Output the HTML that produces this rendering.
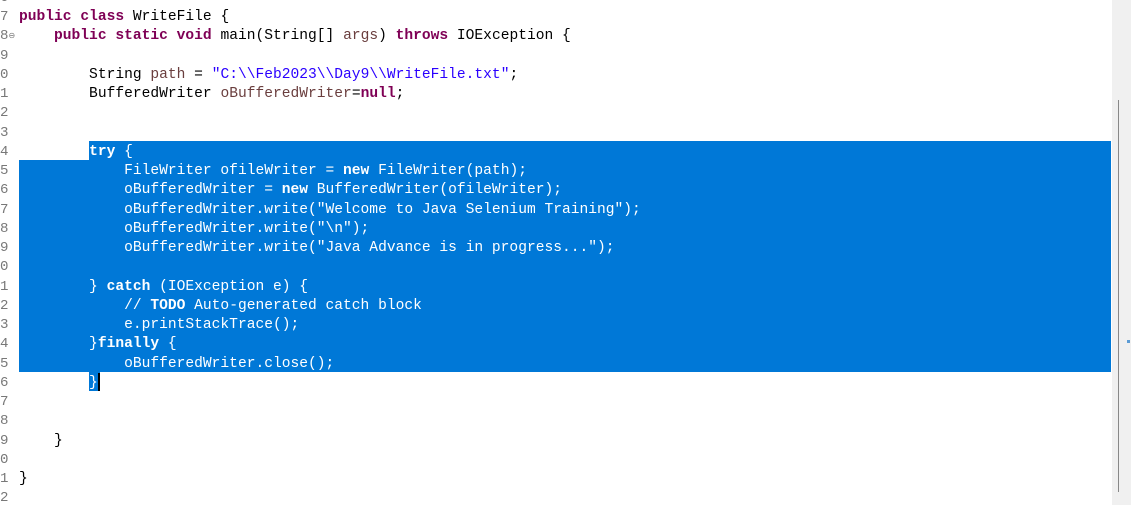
<!DOCTYPE html>
<html><head><meta charset="utf-8"><style>
html,body{margin:0;padding:0;background:#fff;width:1131px;height:505px;overflow:hidden;position:relative;}
.ln{position:absolute;left:0;width:12px;font:14.1px "Liberation Mono",monospace;color:#787878;}
.code{position:absolute;left:19px;font:14.6px "Liberation Mono",monospace;color:#000;white-space:pre;}
.row{position:absolute;height:19.24px;line-height:19.24px;}
.k{color:#7f0055;font-weight:bold}
.s{color:#2a00ff}
.v{color:#6a3e3e}
.sel{position:absolute;background:#0078d7;}
.w,.w .k,.w .s,.w .v{color:#fff}
</style></head><body>
<div class="sel" style="left:89px;top:141px;width:1022px;height:19.3px"></div>
<div class="sel" style="left:19px;top:160.2px;width:1092px;height:212px"></div>
<div class="sel" style="left:89px;top:372px;width:11px;height:19.3px"></div>
<div style="position:absolute;left:98px;top:373px;width:2px;height:18px;background:#000"></div>
<div style="position:absolute;left:1112px;top:0;width:19px;height:505px;background:#f0f0f0"></div>
<div style="position:absolute;left:1118px;top:100px;width:1px;height:392px;background:#888"></div>
<div style="position:absolute;left:1127px;top:340px;width:3px;height:3px;background:#5b9bd5"></div>
<div id="nums"></div>
<div class="code" id="c"></div>
<script>
var lines=[
'',
'<span class="k">public</span> <span class="k">class</span> WriteFile {',
'    <span class="k">public</span> <span class="k">static</span> <span class="k">void</span> main(String[] <span class="v">args</span>) <span class="k">throws</span> IOException {',
'',
'        String <span class="v">path</span> = <span class="s">"C:\\\\Feb2023\\\\Day9\\\\WriteFile.txt"</span>;',
'        BufferedWriter <span class="v">oBufferedWriter</span>=<span class="k">null</span>;',
'',
'',
'        <span class="w"><span class="k">try</span> {</span>',
'<span class="w">            FileWriter ofileWriter = <span class="k">new</span> FileWriter(path);</span>',
'<span class="w">            oBufferedWriter = <span class="k">new</span> BufferedWriter(ofileWriter);</span>',
'<span class="w">            oBufferedWriter.write("Welcome to Java Selenium Training");</span>',
'<span class="w">            oBufferedWriter.write("\\n");</span>',
'<span class="w">            oBufferedWriter.write("Java Advance is in progress...");</span>',
'',
'<span class="w">        } <span class="k">catch</span> (IOException e) {</span>',
'<span class="w">            // <b>TODO</b> Auto-generated catch block</span>',
'<span class="w">            e.printStackTrace();</span>',
'<span class="w">        }<span class="k">finally</span> {</span>',
'<span class="w">            oBufferedWriter.close();</span>',
'<span class="w">        }</span>',
'','','    }','','}',''];
var nums=['6','7','8','9','0','1','2','3','4','5','6','7','8','9','0','1','2','3','4','5','6','7','8','9','0','1','2'];
var c='',n='';
for(var i=0;i<lines.length;i++){var t=(-11+i*19.24).toFixed(2);
c+='<div class="row" style="top:'+t+'px;left:0">'+lines[i]+'</div>';
n+='<div class="ln row" style="top:'+t+'px">'+nums[i]+(i==2?'<span style="font-size:8px;vertical-align:top">⊖</span>':'')+'</div>';}
document.getElementById('c').innerHTML=c;document.getElementById('nums').innerHTML=n;
</script>
</body></html>
